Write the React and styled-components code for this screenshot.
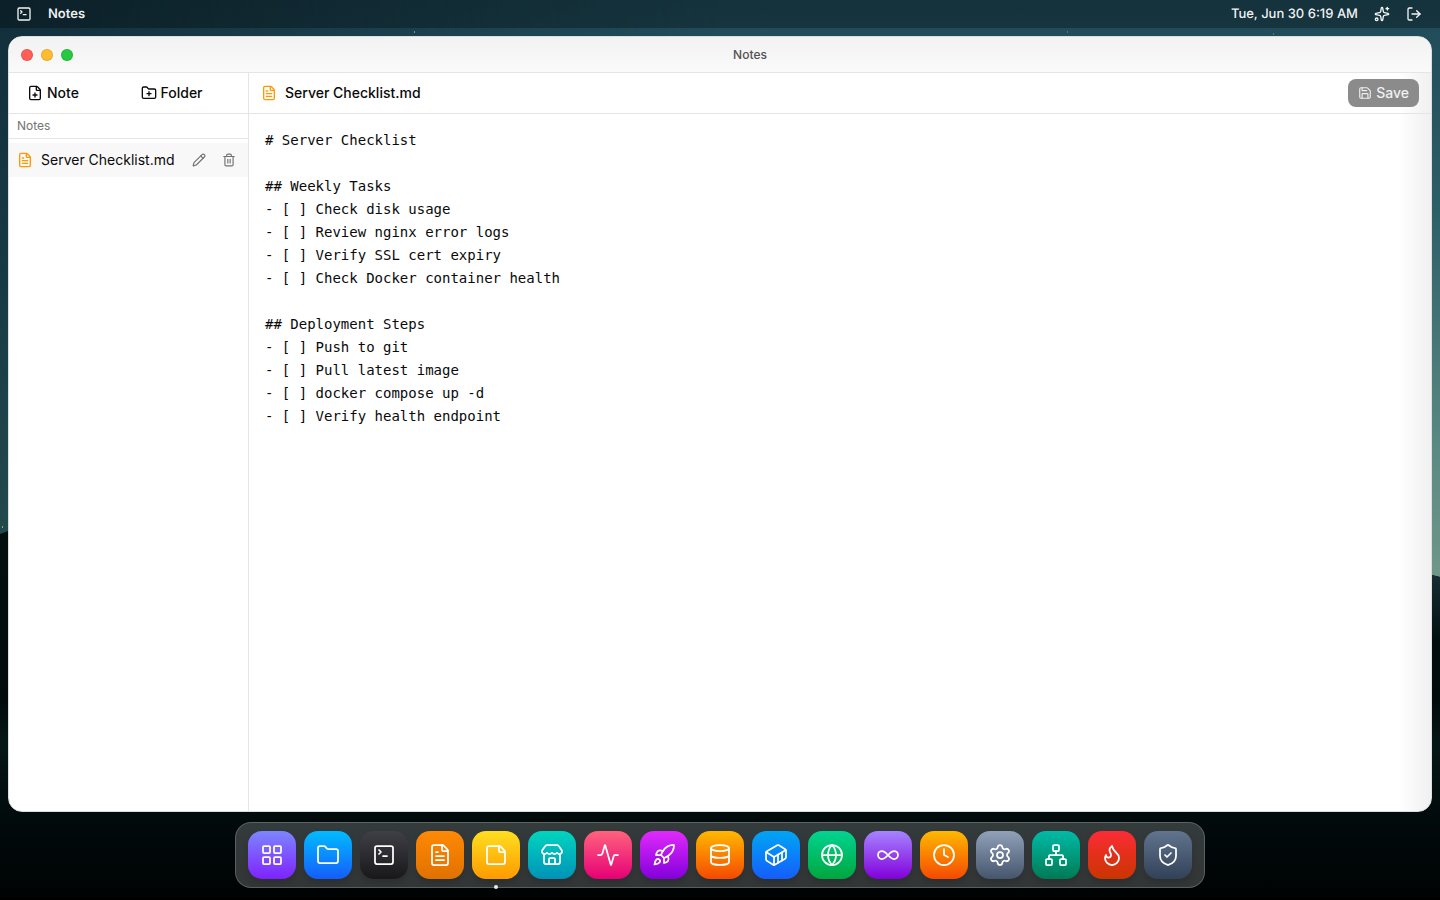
import React, { useState } from "react";
import styled, { createGlobalStyle } from "styled-components";
import {
  Activity,
  Clock,
  Container,
  Database,
  FilePlus,
  FileText,
  Flame,
  Folder,
  FolderPlus,
  Globe,
  Infinity as InfinityIcon,
  LayoutGrid,
  LogOut,
  Network,
  Pencil,
  Rocket,
  Save,
  Settings,
  ShieldCheck,
  Sparkles,
  SquareTerminal,
  StickyNote,
  Store,
  Trash2,
} from "lucide-react";

const checklist = `# Server Checklist

## Weekly Tasks
- [ ] Check disk usage
- [ ] Review nginx error logs
- [ ] Verify SSL cert expiry
- [ ] Check Docker container health

## Deployment Steps
- [ ] Push to git
- [ ] Pull latest image
- [ ] docker compose up -d
- [ ] Verify health endpoint
`;

const apps = [
  { name: "Launchpad", icon: LayoutGrid, colors: "#7c86ff, #7f22fe" },
  { name: "Files", icon: Folder, colors: "#00bcff, #155dfc" },
  { name: "Terminal", icon: SquareTerminal, colors: "#3f3f46, #18181b" },
  { name: "Editor", icon: FileText, colors: "#ff8904, #e17100" },
  { name: "Notes", icon: StickyNote, colors: "#ffdf20, #fe9a00", open: true },
  { name: "Store", icon: Store, colors: "#00d5be, #0092b8" },
  { name: "Monitor", icon: Activity, colors: "#ff637e, #e60076" },
  { name: "Deploy", icon: Rocket, colors: "#e12afb, #8200db" },
  { name: "Database", icon: Database, colors: "#ffb900, #f54900" },
  { name: "Containers", icon: Container, colors: "#00a6f4, #155dfc" },
  { name: "Domains", icon: Globe, colors: "#00d492, #00a63e" },
  { name: "Pipelines", icon: InfinityIcon, colors: "#a684ff, #8200db" },
  { name: "Cron", icon: Clock, colors: "#ffb900, #f54900" },
  { name: "Settings", icon: Settings, colors: "#90a1b9, #45556c" },
  { name: "Network", icon: Network, colors: "#00bba7, #007a55" },
  { name: "Firewall", icon: Flame, colors: "#fb2c36, #ca3500" },
  { name: "Security", icon: ShieldCheck, colors: "#62748e, #314158" },
];

const App = () => {
  const [text, setText] = useState(checklist);

  return (
    <Desktop>
      <GlobalStyle />
      <Wallpaper />
      <MenuBar>
        <MenuGroup>
          <MenuButton aria-label="Terminal">
            <SquareTerminal size={16} />
          </MenuButton>
          <AppName>Notes</AppName>
        </MenuGroup>
        <MenuGroup>
          <DateText>Tue, Jun 30 6:19 AM</DateText>
          <MenuButton aria-label="Assistant">
            <Sparkles size={16} />
          </MenuButton>
          <MenuButton aria-label="Log out">
            <LogOut size={16} />
          </MenuButton>
        </MenuGroup>
      </MenuBar>

      <Window>
        <TitleBar>
          <Lights>
            <Light $color="#ff5f57" aria-label="Close" />
            <Light $color="#febc2e" aria-label="Minimize" />
            <Light $color="#28c840" aria-label="Maximize" />
          </Lights>
          <Title>Notes</Title>
        </TitleBar>

        <Body>
          <Sidebar>
            <SidebarActions>
              <ActionButton>
                <FilePlus size={16} />
                Note
              </ActionButton>
              <ActionButton>
                <FolderPlus size={16} />
                Folder
              </ActionButton>
            </SidebarActions>
            <Crumb>Notes</Crumb>
            <NoteList>
              <NoteRow>
                <NoteLink href="#note">
                  <NoteIcon size={16} />
                  Server Checklist.md
                </NoteLink>
                <RowButton aria-label="Rename">
                  <Pencil size={14} />
                </RowButton>
                <RowButton aria-label="Delete">
                  <Trash2 size={14} />
                </RowButton>
              </NoteRow>
            </NoteList>
          </Sidebar>

          <Editor>
            <EditorBar>
              <FileName htmlFor="content">
                <NoteIcon size={16} />
                Server Checklist.md
              </FileName>
              <SaveButton disabled>
                <Save size={14} />
                Save
              </SaveButton>
            </EditorBar>
            <TextArea
              id="content"
              spellCheck={false}
              value={text}
              onChange={(e) => setText(e.target.value)}
            />
          </Editor>
        </Body>
      </Window>

      <Dock>
        {apps.map(({ name, icon: Icon, colors, open }) => (
          <DockButton key={name} aria-label={name} $colors={colors}>
            <Icon size={24} strokeWidth={1.75} />
            {open && <OpenDot />}
          </DockButton>
        ))}
      </Dock>
    </Desktop>
  );
};

const Wallpaper = () => (
  <Backdrop viewBox="0 0 1440 900" preserveAspectRatio="none" aria-hidden="true">
    <defs>
      <linearGradient id="sky" x1="0" y1="0" x2="0" y2="1">
        <stop offset="0" stopColor="#122f3b" />
        <stop offset="0.3" stopColor="#183a45" />
        <stop offset="0.6" stopColor="#234a4d" />
        <stop offset="1" stopColor="#234a4d" />
      </linearGradient>
      <linearGradient id="glow" x1="0" y1="0" x2="0" y2="1">
        <stop offset="0" stopColor="#1f4957" />
        <stop offset="0.35" stopColor="#2d5f68" />
        <stop offset="0.75" stopColor="#5b8983" />
        <stop offset="1" stopColor="#73998a" />
      </linearGradient>
      <linearGradient id="fade" x1="0" y1="0" x2="1" y2="0">
        <stop offset="0" stopColor="#000" />
        <stop offset="0.5" stopColor="#fff" />
      </linearGradient>
      <linearGradient id="hill" x1="0" y1="0" x2="0" y2="1">
        <stop offset="0" stopColor="#02100f" />
        <stop offset="0.5" stopColor="#020b0c" />
        <stop offset="0.6" stopColor="#061616" />
        <stop offset="0.85" stopColor="#010809" />
        <stop offset="1" stopColor="#000304" />
      </linearGradient>
      <linearGradient id="ridge" x1="0" y1="0" x2="0" y2="1">
        <stop offset="0" stopColor="#162d33" />
        <stop offset="0.5" stopColor="#0e2024" />
        <stop offset="1" stopColor="#02100f" />
      </linearGradient>
      <mask id="east">
        <rect width="1440" height="600" fill="url(#fade)" />
      </mask>
    </defs>
    <rect width="1440" height="900" fill="url(#sky)" />
    <rect width="1440" height="600" fill="url(#glow)" mask="url(#east)" />
    <path d="M0 534 L8 531 L400 500 L900 560 L1432 575 L1440 577 V900 H0 Z" fill="url(#hill)" />
    <path d="M1400 574 L1432 575 L1440 577 V640 H1400 Z" fill="url(#ridge)" />
    <rect x="2" y="526" width="1" height="2" fill="#8fae6c" />
    <rect x="1273" y="33" width="1" height="2" fill="#4f7781" />
    <rect x="1067" y="31" width="1" height="2" fill="#4f7781" />
    <rect x="414" y="31" width="1" height="2" fill="#6f949b" />
    <rect y="897" width="1440" height="3" fill="#000" />
  </Backdrop>
);

const GlobalStyle = createGlobalStyle`
  * {
    box-sizing: border-box;
  }

  body {
    margin: 0;
    font-family: Inter, sans-serif;
    font-size: 14px;
    line-height: 20px;
    color: #0a0a0a;
  }

  button {
    font: inherit;
    color: inherit;
    background: none;
    border: none;
    padding: 0;
    cursor: pointer;
  }
`;

const Desktop = styled.div`
  position: relative;
  height: 100vh;
  display: flex;
  flex-direction: column;
  overflow: hidden;
`;

const Backdrop = styled.svg`
  position: absolute;
  inset: 0;
  width: 100%;
  height: 100%;
  z-index: -1;
`;

const MenuBar = styled.header`
  display: flex;
  align-items: center;
  justify-content: space-between;
  height: 28px;
  padding: 0 18px 0 16px;
  background-color: rgba(0, 0, 0, 0.3);
  color: rgba(255, 255, 255, 0.95);
  font-size: 13px;
  text-rendering: geometricPrecision;
`;

const MenuGroup = styled.div`
  display: flex;
  align-items: center;
  gap: 16px;
`;

const MenuButton = styled.button`
  display: flex;
`;

const AppName = styled.span`
  font-weight: 600;
`;

const DateText = styled.time`
  font-weight: 500;
`;

const Window = styled.main`
  flex: 1;
  min-height: 0;
  display: flex;
  flex-direction: column;
  margin: 8px 8px 10px;
  background: linear-gradient(to left, #f0f0f0, #fff 32px);
  border: 1px solid #dcdfe0;
  border-radius: 14px;
  overflow: hidden;
`;

const TitleBar = styled.div`
  display: grid;
  grid-template-columns: 60px 1fr;
  align-items: center;
  height: 36px;
  padding: 0 12px;
  background: linear-gradient(#f2f2f2, #fafafa);
  border-bottom: 1px solid #e5e5e5;
`;

const Lights = styled.div`
  display: flex;
  gap: 8px;
`;

const Light = styled.button`
  width: 12px;
  height: 12px;
  border-radius: 50%;
  background-color: ${(props) => props.$color};
  box-shadow: inset 0 0 0 1px rgba(0, 0, 0, 0.1);
`;

const Title = styled.h1`
  margin: 0;
  font-size: 12px;
  font-weight: 500;
  text-align: center;
  color: #525252;
`;

const Body = styled.div`
  flex: 1;
  min-height: 0;
  display: flex;
`;

const Sidebar = styled.aside`
  flex: 0 0 240px;
  border-right: 1px solid #e5e5e5;
`;

const SidebarActions = styled.div`
  display: flex;
  align-items: center;
  gap: 4px;
  height: 41px;
  padding: 0 8px;
  border-bottom: 1px solid #e5e5e5;
`;

const ActionButton = styled.button`
  flex: 1;
  display: flex;
  align-items: center;
  gap: 4px;
  padding: 4px 10px;
  font-weight: 500;
`;

const Crumb = styled.div`
  padding: 4px 8px;
  font-size: 12px;
  line-height: 16px;
  color: #737373;
  border-bottom: 1px solid #e5e5e5;
`;

const NoteList = styled.ul`
  list-style: none;
  margin: 0;
  padding: 4px 0;
`;

const NoteRow = styled.li`
  display: flex;
  align-items: center;
  gap: 6px;
  height: 34px;
  padding: 0 7px 0 8px;
  background-color: #f8f8f8;
`;

const NoteLink = styled.a`
  flex: 1;
  display: flex;
  align-items: center;
  gap: 8px;
  color: inherit;
  text-decoration: none;
  white-space: nowrap;
`;

const NoteIcon = styled(FileText)`
  flex: none;
  color: #fe9a00;
`;

const RowButton = styled.button`
  display: flex;
  align-items: center;
  justify-content: center;
  width: 24px;
  height: 24px;
  color: #737373;
`;

const Editor = styled.section`
  flex: 1;
  min-width: 0;
  display: flex;
  flex-direction: column;
`;

const EditorBar = styled.div`
  display: flex;
  align-items: center;
  justify-content: space-between;
  height: 41px;
  padding: 0 12px;
  border-bottom: 1px solid #e5e5e5;
`;

const FileName = styled.label`
  display: flex;
  align-items: center;
  gap: 8px;
  font-weight: 500;
`;

const SaveButton = styled.button`
  display: flex;
  align-items: center;
  gap: 4px;
  height: 28px;
  padding: 0 10px;
  border-radius: 8px;
  background-color: #8b8b8b;
  color: #f0f0f0;
  font-weight: 500;
`;

const TextArea = styled.textarea`
  flex: 1;
  width: 100%;
  padding: 15px 16px;
  border: none;
  outline: none;
  resize: none;
  background: transparent;
  color: inherit;
  font-family: "DejaVu Sans Mono", monospace;
  font-size: 14px;
  line-height: 23px;
`;

const Dock = styled.nav`
  align-self: center;
  display: flex;
  gap: 8px;
  margin-bottom: 12px;
  padding: 8px 12px;
  background-color: rgba(255, 255, 255, 0.2);
  border: 1px solid rgba(255, 255, 255, 0.2);
  border-radius: 16px;
`;

const DockButton = styled.button`
  position: relative;
  display: flex;
  align-items: center;
  justify-content: center;
  width: 48px;
  height: 48px;
  border-radius: 14px;
  background: linear-gradient(${(props) => props.$colors});
  color: #fff;
  box-shadow: 0 4px 6px rgba(0, 0, 0, 0.15);
`;

const OpenDot = styled.span`
  position: absolute;
  left: 22px;
  bottom: -10px;
  width: 4px;
  height: 4px;
  border-radius: 50%;
  background-color: rgba(255, 255, 255, 0.9);
`;

export default App;
